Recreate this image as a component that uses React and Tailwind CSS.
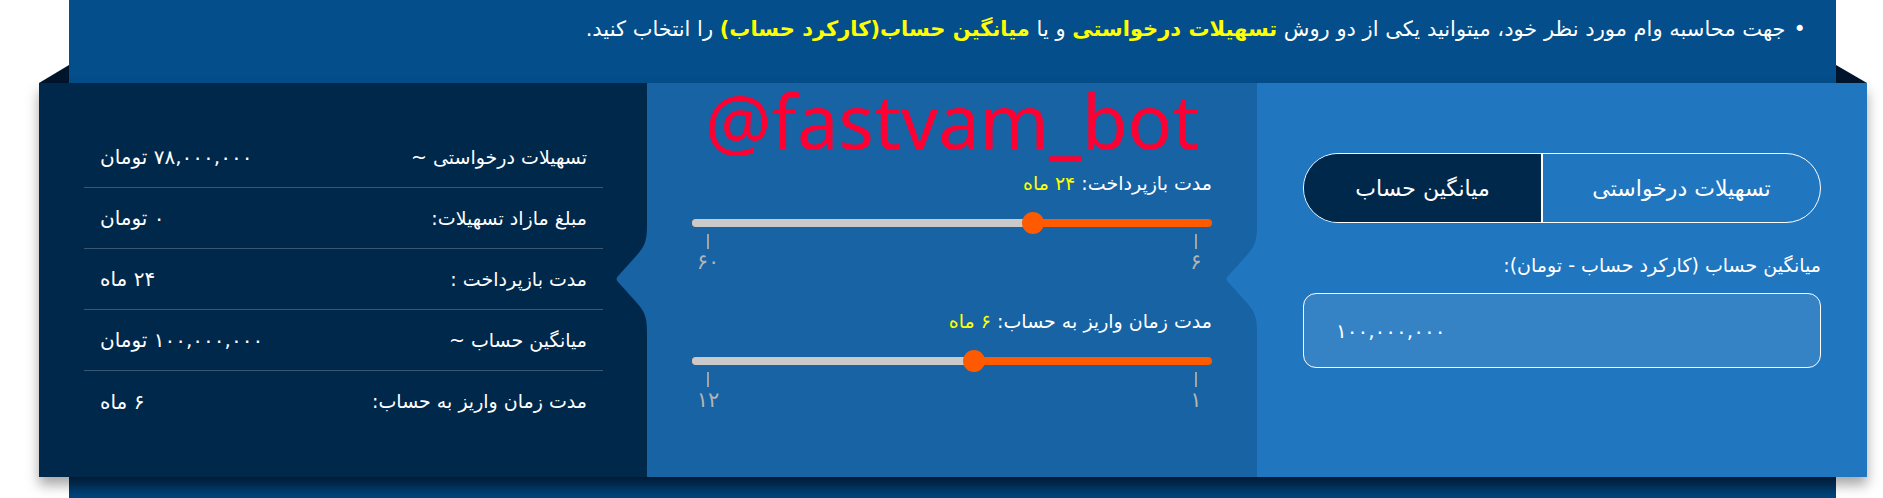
import React from "react";

const rows = [
  { label: "تسهیلات درخواستی ~", value: "۷۸,۰۰۰,۰۰۰ تومان" },
  { label: "مبلغ مازاد تسهیلات:", value: "۰ تومان" },
  { label: "مدت بازپرداخت :", value: "۲۴ ماه" },
  { label: "میانگین حساب ~", value: "۱۰۰,۰۰۰,۰۰۰ تومان" },
  { label: "مدت زمان واریز به حساب:", value: "۶ ماه" },
];

const Slider = ({ min, max, value, minLabel, maxLabel }) => {
  // rtl slider: min sits on the right, thumb travels between the ticks
  const f = (max - value) / (max - min);
  const pos = `calc(16px + ${f} * (100% - 32px))`;
  return (
    <div dir="ltr">
      <div className="relative h-[22px]">
        <div className="absolute left-0 right-0 top-[7px] h-[8px] rounded-full bg-[#ff5a00]" />
        <div className="absolute left-0 top-[7px] h-[8px] rounded-l-full bg-[#cacaca]" style={{ width: pos }} />
        <div className="absolute top-0 h-[22px] w-[22px] -ml-[11px] rounded-full bg-[#ff5a00]" style={{ left: pos }} />
      </div>
      <div className="flex justify-between">
        {[maxLabel, minLabel].map((t, i) => (
          <div key={i} className="w-[32px] flex flex-col items-center">
            <div className="w-[2px] h-[15px] bg-[#a3a3a3]" />
            <div className="mt-[1px] h-[24px] leading-[24px] text-[21px] text-[#b4b4b4]">{t}</div>
          </div>
        ))}
      </div>
    </div>
  );
};

const Bump = ({ left, fill }) => (
  <svg className="absolute top-[143px]" style={{ left }} width="34" height="106" viewBox="0 0 34 106">
    <path d="M34,0 C34,16 31,21 24,29 L6,49 Q1,53 6,57 L24,77 C31,85 34,90 34,106 Z" fill={fill} />
  </svg>
);

export default function App() {
  return (
    <div dir="rtl" className="w-[1883px] h-[498px] bg-white overflow-hidden font-['DejaVu_Sans',sans-serif] text-white">
      {/* intro banner */}
      <div className="ml-[69px] mr-[47px] h-[83px] bg-[#034e8b] pr-[30px] pt-[14px]">
        <p className="text-[21px] leading-[30px]">
          <span className="ml-[8px]">•</span>
          جهت محاسبه وام مورد نظر خود، میتوانید یکی از دو روش{" "}
          <b className="text-[#ffff00]">تسهیلات درخواستی</b> و یا{" "}
          <b className="text-[#ffff00]">میانگین حساب(کارکرد حساب)</b> را انتخاب کنید.
        </p>
      </div>

      {/* calculator card */}
      <div dir="ltr" className="relative z-10 ml-[39px] mr-[16px] h-[394px] flex shadow-[0_8px_12px_rgba(0,0,0,0.35)]">
        <svg className="absolute left-0 -top-[18px]" width="30" height="18" viewBox="0 0 30 18">
          <polygon points="0,18 30,0 30,18" fill="#00152b" />
        </svg>
        <svg className="absolute right-0 -top-[18px]" width="31" height="18" viewBox="0 0 31 18">
          <polygon points="0,0 31,18 0,18" fill="#00152b" />
        </svg>

        {/* summary */}
        <div dir="rtl" className="w-[608px] bg-[#00284b] pt-[44px] pl-[45px] pr-[44px]">
          {rows.map((r, i) => (
            <div
              key={i}
              className={`h-[61px] px-[16px] flex items-center justify-between text-[19px] ${i < 4 ? "border-b border-[#3b5772]" : ""}`}
            >
              <span>{r.label}</span>
              <span className="text-[20px] tracking-[0.5px]">{r.value}</span>
            </div>
          ))}
        </div>

        {/* sliders */}
        <div dir="rtl" className="relative w-[610px] bg-[#1763a3] px-[45px] pt-[85px]">
          <div dir="ltr" className="absolute left-0 right-0 -top-[10px] text-center text-[74px] leading-[96px] text-[#ff0033] font-['Noto_Sans',sans-serif]">
            @fastvam_bot
          </div>
          <div className="relative h-[30px] leading-[30px] text-[19px]">
            مدت بازپرداخت: <span className="text-[#ffff00]">۲۴ ماه</span>
          </div>
          <div className="mt-[14px]">
            <Slider min={6} max={60} value={24} minLabel="۶" maxLabel="۶۰" />
          </div>
          <div className="mt-[32px] h-[30px] leading-[30px] text-[19px]">
            مدت زمان واریز به حساب: <span className="text-[#ffff00]">۶ ماه</span>
          </div>
          <div className="mt-[14px]">
            <Slider min={1} max={12} value={6} minLabel="۱" maxLabel="۱۲" />
          </div>
        </div>

        {/* inputs */}
        <div dir="rtl" className="w-[610px] bg-[#2076bf] px-[46px] pt-[70px]">
          <div className="h-[70px] flex rounded-full border-[1.5px] border-white overflow-hidden text-[22px]">
            <div className="w-[279px] flex items-center justify-center border-l-2 border-white">تسهیلات درخواستی</div>
            <div className="flex-1 flex items-center justify-center bg-[#00284b]">میانگین حساب</div>
          </div>
          <div className="mt-[27px] h-[30px] leading-[30px] text-[19px]">میانگین حساب (کارکرد حساب - تومان):</div>
          <div dir="ltr" className="mt-[13px] h-[75px] rounded-[13px] border border-white bg-[#3583c5] flex items-center pl-[32px] text-[20px]">
            ۱۰۰,۰۰۰,۰۰۰
          </div>
        </div>

        <Bump left={574} fill="#1763a3" />
        <Bump left={1184} fill="#2076bf" />
      </div>

      <div className="ml-[69px] mr-[47px] h-[21px] bg-gradient-to-b from-[#002a50] to-[#004680]" />
    </div>
  );
}
